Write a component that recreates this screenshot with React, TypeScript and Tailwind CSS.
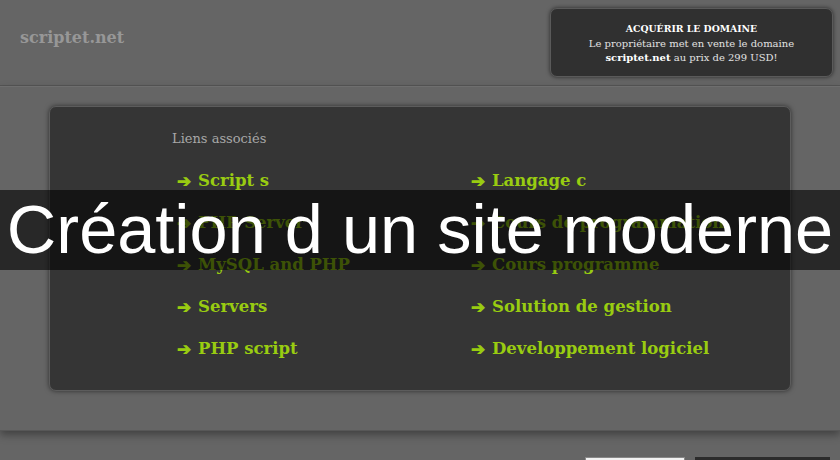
const links: [string, string][] = [
    ['Script s', 'Langage c'],
    ['PHP Server', 'Cours de programmation'],
    ['MySQL and PHP', 'Cours programme'],
    ['Servers', 'Solution de gestion'],
    ['PHP script', 'Developpement logiciel'],
]

const serif = { fontFamily: '"DejaVu Serif", "Liberation Serif", serif' }

const LinkItem = ({ label }: { label: string }) => (
    <a href="#" className="flex items-center gap-[7px] text-[16.5px] font-bold leading-[42px] text-[#99cc11]">
        <span className="text-[17px]">➔</span>
        <span>{label}</span>
    </a>
)

const App = () => {
    return (
        <div
            className="relative w-[840px] h-[460px] overflow-hidden bg-[#656565]"
            style={serif}
        >
            {/* header */}
            <div className="flex h-[86px] justify-between border-b border-[#555] shadow-[0_1px_0_#6e6e6e]">
                <div className="pl-[20px] pt-[26px] text-[16px] font-bold text-[#979797]">
                    scriptet.net
                </div>
                <div className="mr-[7px] mt-[8px] h-[69px] w-[283px] rounded-[7px] border border-[#5a5a5a] bg-[#303030] pt-[13px] text-center text-white shadow-[0_0_4px_rgba(0,0,0,0.6)]">
                    <div className="text-[9.3px] font-bold leading-[14px]">
                        ACQUÉRIR LE DOMAINE
                    </div>
                    <div className="text-[10px] leading-[15px] text-[#e2e2e2]">
                        Le propriétaire met en vente le domaine
                    </div>
                    <div className="text-[10px] leading-[14px] text-[#e2e2e2]">
                        <b className="text-white">scriptet.net</b> au prix de 299 USD!
                    </div>
                </div>
            </div>

            {/* main section */}
            <div className="h-[345px] border-b border-[#575757] pt-[20px] shadow-[0_4px_8px_rgba(0,0,0,0.35)]">
                <div className="ml-[49px] h-[285px] w-[742px] rounded-[7px] border border-[#5c5c5c] bg-[#353535] pl-[122px] pt-[22px] shadow-[0_0_5px_rgba(0,0,0,0.55)]">
                    <div className="text-[13px] leading-[20px] text-[#a8a8a8]">Liens associés</div>
                    <div className="mt-[11px] grid grid-cols-[294px_1fr] pl-[5px]">
                        {links.map(([a, b]) => (
                            <div key={a} className="contents">
                                <LinkItem label={a} />
                                <LinkItem label={b} />
                            </div>
                        ))}
                    </div>
                </div>
            </div>

            {/* footer bits */}
            <div className="flex justify-end gap-[10px] pr-[10px] pt-[26px]">
                <div className="h-[10px] w-[100px] border border-[#888] bg-[#f2f2f2]" />
                <div className="h-[10px] w-[135px] bg-[#2c2c2c]" />
            </div>

            {/* overlay title */}
            <div className="absolute left-0 top-[190px] flex h-[80px] w-full items-center justify-center bg-black/60">
                <span
                    className="whitespace-nowrap text-[68.5px] leading-none text-white"
                    style={{ fontFamily: '"Liberation Sans", Arial, sans-serif' }}
                >
                    Création d un site moderne
                </span>
            </div>
        </div>
    )
}

export default App
